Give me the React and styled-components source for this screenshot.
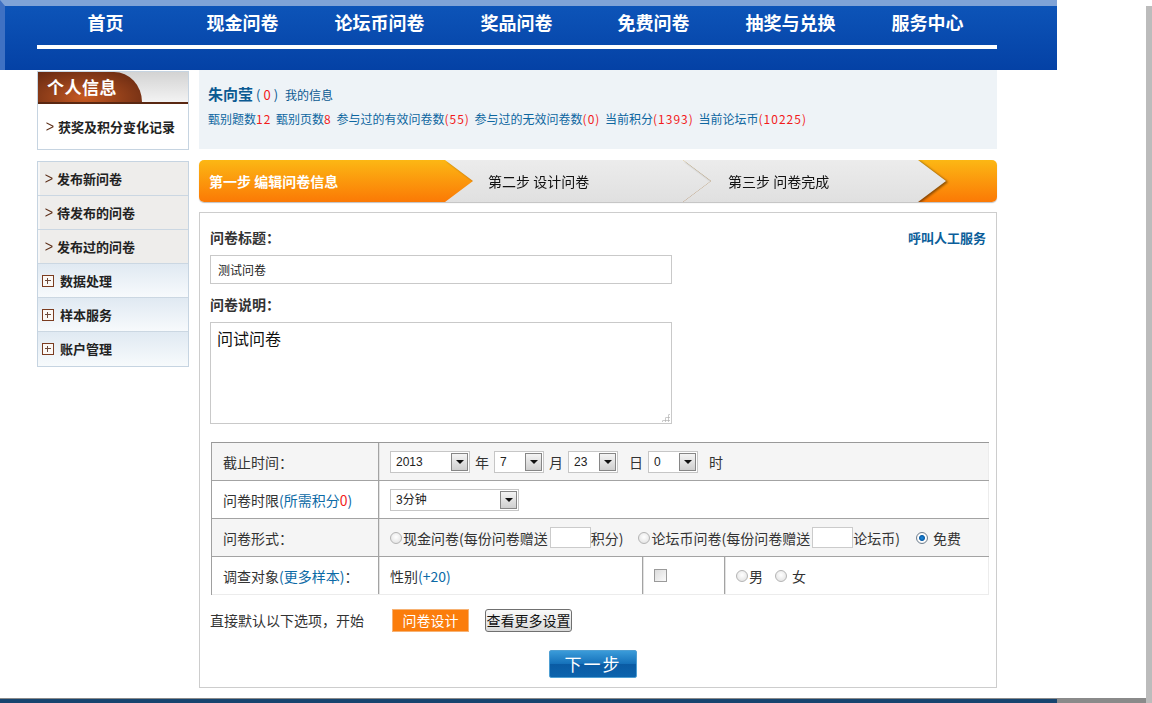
import React from 'react';
import styled, { createGlobalStyle } from 'styled-components';

const GlobalStyle = createGlobalStyle`
  html, body { margin: 0; padding: 0; background: #fff; }
  body { font-family: "Noto Sans CJK SC", "Noto Sans", sans-serif; color: #333; }
  * { box-sizing: border-box; }
`;

const Page = styled.div`
  width: 1146px;
  background: #fff;
  box-shadow: 6px 6px 0 #bcbcbc;
`;

const Header = styled.header`
  width: 1057px;
  height: 70px;
  border-top: 6px solid #7fa3d7;
  border-left: 5px solid #3f71c3;
  background: linear-gradient(#0d54b8, #0441a5);
  padding-left: 32px;
`;

const NavList = styled.nav`
  display: grid;
  grid-template-columns: repeat(7, 137px);
  height: 32px;
`;

const NavItem = styled.a`
  color: #fff;
  font-weight: 700;
  font-size: 18px;
  line-height: 32px;
  text-align: center;
  text-decoration: none;
`;

const NavLine = styled.div`
  margin-top: 7px;
  width: 960px;
  height: 4px;
  background: #fff;
`;

const Layout = styled.div`
  display: flex;
  align-items: flex-start;
  gap: 10px;
  padding-left: 37px;
`;

const Sidebar = styled.aside`
  width: 152px;
  display: flex;
  flex-direction: column;
  gap: 11px;
  padding-top: 1px;
`;

const SideBox = styled.div`
  border: 1px solid #c6d4e1;
  background: #fff;
`;

const ProfileHead = styled.div`
  height: 32px;
  display: flex;
  background: linear-gradient(#d3d3d3, #f3f3f3);
  border-bottom: 2px solid #5a2812;
`;

const ProfileTab = styled.div`
  width: 104px;
  height: 100%;
  border-top-right-radius: 28px 30px;
  background: radial-gradient(ellipse at 45% 85%, #c85a22 0%, #93401a 45%, #5d2410 100%);
  color: #fff;
  font-weight: 700;
  font-size: 17px;
  line-height: 30px;
  padding-left: 9px;
  letter-spacing: 0.5px;
`;

const ProfileBody = styled.div`
  height: 45px;
  display: flex;
  align-items: center;
  padding-left: 7px;
`;

const Chevron = styled.span`
  font-family: "Liberation Sans", sans-serif;
  font-size: 17px;
  line-height: 20px;
  color: #5e3019;
  margin-right: 3px;
  transform: scaleX(0.85);
`;

const SideText = styled.span`
  font-size: 13px;
  font-weight: 700;
  color: #222;
  line-height: 20px;
`;

const MenuItem = styled.div`
  height: 34px;
  display: flex;
  align-items: center;
  padding-left: ${p => (p.$kind === 'group' ? 4 : 6)}px;
  border-bottom: 1px solid #cbd7e2;
  background: ${p => (p.$kind === 'group' ? 'linear-gradient(#e0e9f2, #f7fafc)' : '#eeedeb')};
  box-shadow: ${p => (p.$kind === 'group' ? 'none' : 'inset 2px 0 0 #f7f7f7')};
  &:last-child { border-bottom: none; }
`;

const PlusBox = styled.span`
  position: relative;
  width: 12px;
  height: 12px;
  border: 1px solid #7b3c20;
  background: #fbf8f5;
  margin-right: 6px;
  &::before, &::after {
    content: "";
    position: absolute;
    background: #6e4a3a;
  }
  &::before { left: 2px; right: 2px; top: 4px; height: 1px; }
  &::after { top: 2px; bottom: 2px; left: 4px; width: 1px; }
`;

const Main = styled.main`
  width: 798px;
  display: flex;
  flex-direction: column;
`;

const InfoBox = styled.section`
  height: 79px;
  background: #eef3f7;
  padding: 14px 9px 0;
`;

const NameLine = styled.div`
  display: flex;
  align-items: baseline;
  line-height: 20px;
  color: #0b5a92;
`;

const Name = styled.span`
  font-size: 15px;
  font-weight: 700;
  color: #0b5a92;
`;

const Paren = styled.span`
  font-size: 13px;
  color: #0b5a92;
  margin: 0 ${p => p.$m || 0}px;
`;

const Red = styled.span`
  color: #f21b1b;
`;

const StatNum = styled.span`
  color: #f21b1b;
  letter-spacing: 1px;
`;

const NameNum = styled.span`
  color: #f21b1b;
  font-size: 13px;
`;

const InfoLink = styled.a`
  font-size: 12px;
  color: #0b5a92;
  margin-left: 4px;
`;

const Stats = styled.div`
  margin-top: 6px;
  font-size: 12px;
  line-height: 16px;
  color: #0d66a0;
  white-space: nowrap;
  word-spacing: 2px;
`;

const StepBar = styled.div`
  margin-top: 11px;
  height: 42px;
  border-radius: 5px;
  overflow: hidden;
  display: flex;
  background: linear-gradient(#fcb714, #fb7905);
  box-shadow: 0 1px 1px rgba(0, 0, 0, 0.25);
`;

const StepActive = styled.div`
  width: 246px;
  flex: none;
  padding-left: 10px;
  color: #fff;
  font-weight: 700;
  font-size: 14px;
  line-height: 42px;
`;

const StepShadow = styled.div`
  flex: none;
  width: ${p => p.$w}px;
  margin-left: ${p => p.$ml || 0}px;
  filter: drop-shadow(2px 1px 1px rgba(0, 0, 0, 0.45));
`;

const StepChevron = styled.div`
  height: 42px;
  background: linear-gradient(#ececec, #e0e0e0);
  clip-path: polygon(0 0, calc(100% - 28px) 0, 100% 50%, calc(100% - 28px) 100%, 0 100%, 28px 50%);
  padding-left: ${p => p.$pl}px;
  color: #111;
  font-size: 14px;
  line-height: 42px;
`;

const Panel = styled.section`
  margin-top: 10px;
  border: 1px solid #cdcdcd;
  padding: 14px 10px 9px 10px;
`;

const LabelRow = styled.div`
  display: flex;
  justify-content: space-between;
  align-items: center;
  height: 20px;
  margin-top: ${p => p.$mt || 0}px;
`;

const FieldLabel = styled.span`
  font-size: 14px;
  font-weight: 700;
  color: #333;
`;

const HelpLink = styled.a`
  font-size: 13px;
  font-weight: 700;
  color: #0b5e9a;
`;

const TextInput = styled.input`
  display: block;
  margin-top: 8px;
  width: 462px;
  height: 29px;
  border: 1px solid #c9c9c9;
  padding: 0 7px;
  font-family: "Noto Sans CJK SC", sans-serif;
  font-size: 12px;
  color: #222;
  outline: none;
`;

const AreaWrap = styled.div`
  position: relative;
  margin-top: 8px;
  width: 462px;
  &::after {
    content: "";
    position: absolute;
    right: 2px;
    bottom: 2px;
    width: 9px;
    height: 9px;
    background: radial-gradient(circle, #b9b9b9 0.9px, transparent 1.3px) 0 0 / 3px 3px;
    clip-path: polygon(100% 0, 100% 100%, 0 100%);
    pointer-events: none;
  }
`;

const TextArea = styled.textarea`
  display: block;
  width: 462px;
  height: 102px;
  border: 1px solid #c9c9c9;
  padding: 4px 6px;
  font-family: "Noto Sans CJK SC", sans-serif;
  font-size: 16px;
  line-height: 22px;
  color: #111;
  outline: none;
  resize: none;
`;

const Table = styled.div`
  margin: 18px 0 0 1px;
  width: 778px;
  border-top: 1px solid #999;
  border-left: 1px solid #a0a0a0;
`;

const Row = styled.div`
  display: grid;
  grid-template-columns: ${p => p.$cols};
  height: 38px;
  background: ${p => (p.$alt ? '#f5f5f5' : '#fff')};
  border-bottom: 1px solid ${p => (p.$last ? '#ececec' : '#a3a3a3')};
`;

const Cell = styled.div`
  display: flex;
  align-items: center;
  padding-left: 11px;
  font-size: 14px;
  line-height: 20px;
  color: #333;
  white-space: nowrap;
  border-right: 1px solid ${p => (p.$end ? '#ececec' : '#a3a3a3')};
  box-shadow: ${p => (p.$first ? 'none' : 'inset 1px 0 0 #e2e2e2')};
`;

const Blue = styled.span`
  color: #0c6aa6;
`;

const Select = styled.span`
  display: inline-flex;
  align-items: center;
  justify-content: space-between;
  flex: none;
  width: ${p => p.$w}px;
  height: 22px;
  border: 1px solid #c6c6c6;
  background: #fff;
  padding: 0 1px 0 5px;
  font-family: "Liberation Sans", "Noto Sans CJK SC", sans-serif;
  font-size: 12px;
  color: #222;
`;

const SelectBtn = styled.span`
  width: 17px;
  height: 18px;
  border: 1px solid #868686;
  background: linear-gradient(#f4f4f4, #cfcfcf);
  display: flex;
  align-items: center;
  justify-content: center;
  &::after {
    content: "";
    border-left: 4px solid transparent;
    border-right: 4px solid transparent;
    border-top: 4px solid #111;
  }
`;

const Unit = styled.span`
  margin: 0 5px 0 ${p => p.$ml ?? 5}px;
  font-size: 14px;
  color: #333;
`;

const Radio = styled.input.attrs({ type: 'radio' })`
  appearance: none;
  margin: 0 ${p => p.$mr ?? 1}px 0 ${p => p.$ml ?? 0}px;
  width: 12px;
  height: 12px;
  border-radius: 50%;
  border: 1px solid #b4b4b4;
  background: radial-gradient(circle at 50% 40%, #fff 0%, #dedede 100%);
  flex: none;
  &:checked {
    border-color: #6e7e8e;
    background: radial-gradient(circle, #1a8ae0 0, #0d5fa8 2.5px, #fff 3.5px, #e6e6e6 100%);
  }
`;

const Check = styled.input.attrs({ type: 'checkbox' })`
  appearance: none;
  margin: 0;
  width: 13px;
  height: 13px;
  border: 1px solid #9a9a9a;
  background: linear-gradient(135deg, #dcdcdc, #fafafa);
`;

const SmallInput = styled.input`
  width: 41px;
  height: 21px;
  margin: 0 0 0 ${p => p.$ml ?? 2}px;
  border: 1px solid #cbcbcb;
  outline: none;
  flex: none;
`;

const ActionRow = styled.div`
  margin-top: 13px;
  height: 24px;
  display: flex;
  align-items: center;
`;

const ActionText = styled.span`
  font-size: 14px;
  color: #333;
  width: 182px;
`;

const OrangeButton = styled.button`
  width: 77px;
  height: 23px;
  border: 1px solid #f7b273;
  background: #fb7d0c;
  color: #fff;
  font-family: "Noto Sans CJK SC", sans-serif;
  font-size: 14px;
  line-height: 20px;
  padding: 0;
`;

const GrayButton = styled.button`
  margin-left: 16px;
  width: 87px;
  height: 23px;
  border: 1px solid #707070;
  border-radius: 3px;
  background: linear-gradient(#fafafa, #dadada);
  color: #111;
  font-family: "Noto Sans CJK SC", sans-serif;
  font-size: 14px;
  line-height: 20px;
  padding: 0;
`;

const NextButton = styled.button`
  display: block;
  margin: 18px 0 0 339px;
  width: 88px;
  height: 28px;
  border: 1px solid #4f9fd3;
  border-radius: 2px;
  background: linear-gradient(#3a9bd9 0%, #1672bb 48%, #0a5ba4 52%, #0d64ad 100%);
  color: #fff;
  font-family: "Noto Sans CJK SC", sans-serif;
  font-size: 17px;
  letter-spacing: 2px;
  line-height: 24px;
  padding: 0;
`;

const Footer = styled.footer`
  margin-top: 10px;
  border-top: 1px solid #8a8a8a;
  background: #8a8a8a;
`;

const FooterBar = styled.div`
  width: 1057px;
  height: 5px;
  background: #17446f;
`;

const navItems = ['首页', '现金问卷', '论坛币问卷', '奖品问卷', '免费问卷', '抽奖与兑换', '服务中心'];

function Sel({ w, children }) {
  return (
    <Select $w={w}>
      <span>{children}</span>
      <SelectBtn />
    </Select>
  );
}

export default function App() {
  return (
    <>
      <GlobalStyle />
      <Page>
        <Header>
          <NavList>
            {navItems.map(n => (
              <NavItem key={n}>{n}</NavItem>
            ))}
          </NavList>
          <NavLine />
        </Header>
        <Layout>
          <Sidebar>
            <SideBox>
              <ProfileHead>
                <ProfileTab>个人信息</ProfileTab>
              </ProfileHead>
              <ProfileBody>
                <Chevron>&gt;</Chevron>
                <SideText>获奖及积分变化记录</SideText>
              </ProfileBody>
            </SideBox>
            <SideBox>
              {['发布新问卷', '待发布的问卷', '发布过的问卷'].map(t => (
                <MenuItem key={t}>
                  <Chevron>&gt;</Chevron>
                  <SideText>{t}</SideText>
                </MenuItem>
              ))}
              {['数据处理', '样本服务', '账户管理'].map(t => (
                <MenuItem key={t} $kind="group">
                  <PlusBox />
                  <SideText>{t}</SideText>
                </MenuItem>
              ))}
            </SideBox>
          </Sidebar>
          <Main>
            <InfoBox>
              <NameLine>
                <Name>朱向莹</Name>
                <Paren $m={3}>(</Paren>
                <NameNum>0</NameNum>
                <Paren $m={3}>)</Paren>
                <InfoLink>我的信息</InfoLink>
              </NameLine>
              <Stats>
                甄别题数<StatNum>12</StatNum> 甄别页数<StatNum>8</StatNum> 参与过的有效问卷数<StatNum>(55)</StatNum>{' '}
                参与过的无效问卷数<StatNum>(0)</StatNum> 当前积分<StatNum>(1393)</StatNum> 当前论坛币
                <StatNum>(10225)</StatNum>
              </Stats>
            </InfoBox>
            <StepBar>
              <StepActive>第一步 编辑问卷信息</StepActive>
              <StepShadow $w={266}>
                <StepChevron $pl={43}>第二步 设计问卷</StepChevron>
              </StepShadow>
              <StepShadow $w={263} $ml={-28}>
                <StepChevron $pl={45}>第三步 问卷完成</StepChevron>
              </StepShadow>
            </StepBar>
            <Panel>
              <LabelRow>
                <FieldLabel>问卷标题：</FieldLabel>
                <HelpLink>呼叫人工服务</HelpLink>
              </LabelRow>
              <TextInput defaultValue="测试问卷" />
              <LabelRow $mt={10}>
                <FieldLabel>问卷说明：</FieldLabel>
              </LabelRow>
              <AreaWrap>
                <TextArea defaultValue="问试问卷" />
              </AreaWrap>
              <Table>
                <Row $cols="167px 1fr" $alt>
                  <Cell $first>截止时间：</Cell>
                  <Cell $end>
                    <Sel w={80}>2013</Sel>
                    <Unit>年</Unit>
                    <Sel w={50}>7</Sel>
                    <Unit>月</Unit>
                    <Sel w={50}>23</Sel>
                    <Unit $ml={11}>日</Unit>
                    <Sel w={50}>0</Sel>
                    <Unit $ml={11}>时</Unit>
                  </Cell>
                </Row>
                <Row $cols="167px 1fr">
                  <Cell $first>
                    问卷时限<Blue>(所需积分<Red>0</Red>)</Blue>
                  </Cell>
                  <Cell $end>
                    <Sel w={129}>3分钟</Sel>
                  </Cell>
                </Row>
                <Row $cols="167px 1fr" $alt>
                  <Cell $first>问卷形式：</Cell>
                  <Cell $end>
                    <Radio name="form" />
                    现金问卷(每份问卷赠送
                    <SmallInput />
                    积分)
                    <Radio name="form" $ml={15} />
                    论坛币问卷(每份问卷赠送
                    <SmallInput />
                    论坛币)
                    <Radio name="form" $ml={16} $mr={5} defaultChecked />
                    免费
                  </Cell>
                </Row>
                <Row $cols="167px 264px 82px 1fr" $last>
                  <Cell $first>
                    调查对象<Blue>(更多样本)</Blue>：
                  </Cell>
                  <Cell>
                    性别<Blue>(+20)</Blue>
                  </Cell>
                  <Cell>
                    <Check />
                  </Cell>
                  <Cell $end>
                    <Radio name="sex" />男
                    <Radio name="sex" $ml={12} $mr={5} />女
                  </Cell>
                </Row>
              </Table>
              <ActionRow>
                <ActionText>直接默认以下选项，开始</ActionText>
                <OrangeButton>问卷设计</OrangeButton>
                <GrayButton>查看更多设置</GrayButton>
              </ActionRow>
              <NextButton>下一步</NextButton>
            </Panel>
          </Main>
        </Layout>
        <Footer>
          <FooterBar />
        </Footer>
      </Page>
    </>
  );
}
